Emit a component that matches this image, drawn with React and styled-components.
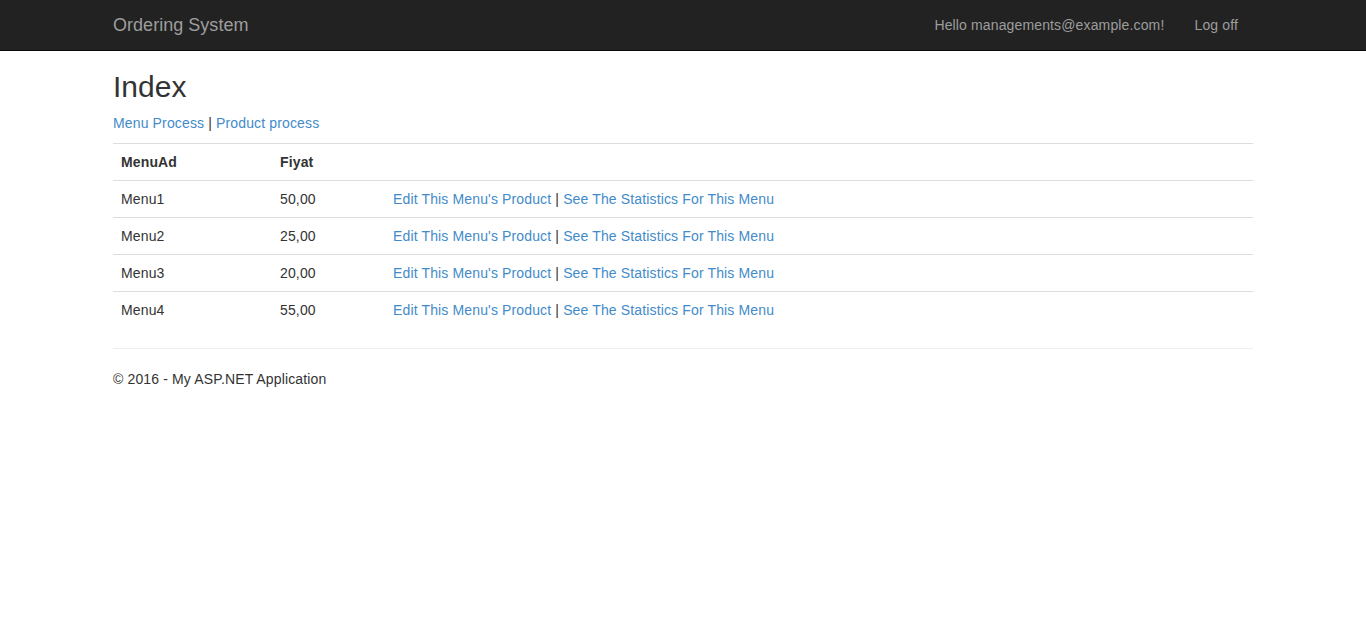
import React from "react";
import styled, { createGlobalStyle } from "styled-components";

const Global = createGlobalStyle`
  * { box-sizing: border-box; }
  html, body { margin: 0; }
  body {
    padding-top: 50px;
    padding-bottom: 20px;
    font-family: "Liberation Sans", Arial, Helvetica, sans-serif;
    font-size: 14px;
    line-height: 20px;
    letter-spacing: 0.14px;
    color: #333;
    background: #fff;
  }
`;

const Navbar = styled.nav`
  position: fixed;
  top: 0;
  left: 0;
  right: 0;
  height: 51px;
  background: #222;
  border-bottom: 1px solid #080808;
  z-index: 10;
`;

const NavInner = styled.div`
  width: 1170px;
  margin: 0 auto;
  padding: 0 15px;
  display: flex;
  align-items: center;
  justify-content: space-between;
  height: 50px;
`;

const Brand = styled.a`
  font-size: 18px;
  line-height: 20px;
  letter-spacing: 0.03px;
  padding: 15px 15px 15px 0;
  color: #9d9d9d;
  text-decoration: none;
`;

const NavList = styled.ul`
  list-style: none;
  margin: 0;
  padding: 0;
  display: flex;
`;

const NavLink = styled.a`
  display: block;
  padding: 15px;
  line-height: 20px;
  color: #9d9d9d;
  text-decoration: none;
`;

const Container = styled.div`
  width: 1170px;
  margin: 0 auto;
  padding: 0 15px;
`;

const Title = styled.h2`
  font-size: 30px;
  font-weight: 500;
  line-height: 33px;
  letter-spacing: 0;
  margin: 20px 0 10px;
  color: #333;
`;

const Para = styled.p`
  margin: 0 0 10px;
`;

const Link = styled.a`
  color: #428bca;
  text-decoration: none;
`;

const Table = styled.table`
  width: 100%;
  border-collapse: collapse;
  border-spacing: 0;
  margin-bottom: 20px;
`;

const Th = styled.th`
  text-align: left;
  font-weight: bold;
  padding: 8px;
  line-height: 20px;
  border-top: 1px solid #ddd;
  width: ${(p) => p.$w || "auto"};
`;

const Td = styled.td`
  padding: 8px;
  line-height: 20px;
  border-top: 1px solid #ddd;
`;

const Hr = styled.hr`
  margin: 20px 0;
  border: 0;
  border-top: 1px solid #eee;
  height: 0;
`;

const Footer = styled.footer`
  p { margin: 0 0 10px; }
`;

const rows = [
  ["Menu1", "50,00"],
  ["Menu2", "25,00"],
  ["Menu3", "20,00"],
  ["Menu4", "55,00"],
];

export default function App() {
  return (
    <>
      <Global />
      <Navbar>
        <NavInner>
          <Brand href="#">Ordering System</Brand>
          <NavList>
            <li><NavLink href="#">Hello managements@example.com!</NavLink></li>
            <li><NavLink href="#">Log off</NavLink></li>
          </NavList>
        </NavInner>
      </Navbar>
      <Container>
        <Title>Index</Title>
        <Para>
          <Link href="#">Menu Process</Link> | <Link href="#">Product process</Link>
        </Para>
        <Table>
          <tbody>
            <tr>
              <Th $w="159px">MenuAd</Th>
              <Th $w="113px">Fiyat</Th>
              <Th></Th>
            </tr>
            {rows.map(([n, p]) => (
              <tr key={n}>
                <Td>{n}</Td>
                <Td>{p}</Td>
                <Td>
                  <Link href="#">Edit This Menu's Product</Link> |{" "}
                  <Link href="#">See The Statistics For This Menu</Link>
                </Td>
              </tr>
            ))}
          </tbody>
        </Table>
        <Hr />
        <Footer>
          <p>© 2016 - My ASP.NET Application</p>
        </Footer>
      </Container>
    </>
  );
}
